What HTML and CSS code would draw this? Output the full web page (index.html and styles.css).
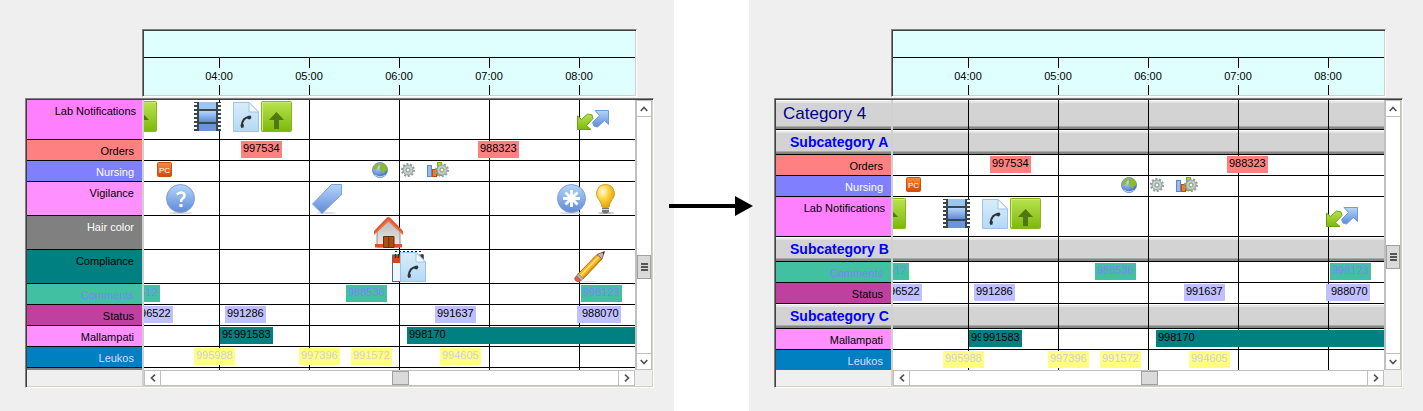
FILE: index.html
```html
<!DOCTYPE html>
<html lang="en">
<head>
<meta charset="utf-8">
<title>Timeline grouping</title>
<link rel="stylesheet" href="styles.css">
</head>
<body>
<svg class="defs" aria-hidden="true">
  <defs>
    <linearGradient id="g-green" x1="0" y1="0" x2="0" y2="1"><stop offset="0" stop-color="#b9e34f"/><stop offset="1" stop-color="#7cb80c"/></linearGradient>
    <linearGradient id="g-blue" x1="0" y1="0" x2="0" y2="1"><stop offset="0" stop-color="#b4d6fa"/><stop offset="1" stop-color="#5f8ad6"/></linearGradient>
    <linearGradient id="g-doc" x1="0" y1="0" x2="0" y2="1"><stop offset="0" stop-color="#d9edfa"/><stop offset="1" stop-color="#b4d9f5"/></linearGradient>
    <linearGradient id="g-orange" x1="0" y1="0" x2="0" y2="1"><stop offset="0" stop-color="#f98c3c"/><stop offset="1" stop-color="#d64a04"/></linearGradient>
    <linearGradient id="g-wall" x1="0" y1="0" x2="0" y2="1"><stop offset="0" stop-color="#b8b8b8"/><stop offset="1" stop-color="#ededed"/></linearGradient>
    <radialGradient id="g-bulb" cx=".35" cy=".3" r=".75"><stop offset="0" stop-color="#fffbe0"/><stop offset=".45" stop-color="#fbd43a"/><stop offset="1" stop-color="#e29a08"/></radialGradient>
    <radialGradient id="g-globe" cx=".35" cy=".3" r=".75"><stop offset="0" stop-color="#bcdcff"/><stop offset="1" stop-color="#3868c4"/></radialGradient>
    <symbol id="i-up" viewBox="0 0 31 31">
      <rect x=".5" y=".5" width="30" height="30" rx="1" fill="url(#g-green)" stroke="#86b81c"/>
      <path d="M1.5 29.500V1.500H29.500" fill="none" stroke="#cdee74"/>
      <path d="M15.500 11L23 19H18V28H13V19H8Z" fill="#4f7713"/>
    </symbol>
    <symbol id="i-film" viewBox="0 0 27 29">
      <rect width="27" height="29" fill="#3a464e"/>
      <rect x="5" y="0" width="17" height="7" fill="#9cc6f2"/>
      <rect x="5" y="9" width="17" height="11" fill="url(#g-blue)"/>
      <rect x="5" y="22" width="17" height="7" fill="#6a94dc"/>
      <path d="M2 1V29M25 1V29" stroke="#fff" stroke-width="2" stroke-dasharray="2 2"/>
      <path d="M0 1V29M27 1V29" stroke="#fff" stroke-width="2" stroke-dasharray="2 2"/>
    </symbol>
    <symbol id="i-doc" viewBox="0 0 26 30">
      <path d="M.5 .5H16L25.500 10V29.500H.5Z" fill="url(#g-doc)" stroke="#9cc4ea"/>
      <path d="M16 .5V10H25.500Z" fill="#f4faff" stroke="#9cc4ea"/>
      <path d="M9 24C9 18 12 15 17 15" fill="none" stroke="#2e3336" stroke-width="2"/>
      <path d="M8 21.500L11 22.500L10.500 25.500L8.500 26L7.500 24ZM14.500 14L17.500 13.500L18.500 15.500L17 17.500L14.500 17Z" fill="#2e3336"/>
    </symbol>
    <symbol id="i-arrows" viewBox="0 0 32 20">
      <path d="M18 .5H31.500V14.500L27.500 10.500L20.500 17L17 16L15.500 12.500L22.500 5.500Z" fill="url(#g-blue)" stroke="#6e9be0"/>
      <path d="M.5 6L4.500 9.500L10.500 4L15 5L16 8.500L9.500 15.500L14 19.500H.5Z" fill="url(#g-green)" stroke="#6fa30e"/>
    </symbol>
    <symbol id="i-pc" viewBox="0 0 15 15">
      <rect x=".5" y=".5" width="14" height="14" rx="1" fill="url(#g-orange)" stroke="#c65410"/>
      <text class="pc-text" x="7.500" y="11" text-anchor="middle" fill="#fff">PC</text>
    </symbol>
    <symbol id="i-globe" viewBox="0 0 16 16">
      <circle cx="8" cy="8" r="7.500" fill="url(#g-globe)" stroke="#6f94c8"/>
      <path d="M1 7Q2 3 6 1L8 2.500L6 4L5 7L3 8ZM8 2L12 1.500Q15.500 4 15.500 8L13 9L12 12L9.500 9L7.500 8L8 5Z" fill="#8dba2c"/>
      <path d="M3 13Q8 16.500 13 13" fill="none" stroke="#bcdcf6"/>
    </symbol>
    <symbol id="i-gear" viewBox="0 0 14 16">
      <circle cx="7" cy="8" r="6" fill="none" stroke="#8f9d98" stroke-width="2" stroke-dasharray="2 1.700"/>
      <circle cx="7" cy="8" r="5" fill="#c7d0cc" stroke="#93a09b"/>
      <circle cx="7" cy="8" r="2" fill="#f5f7f6" stroke="#84918c"/>
    </symbol>
    <symbol id="i-stats" viewBox="0 0 22 16">
      <rect x=".5" y="3.500" width="4" height="11" fill="#8fbcf2" stroke="#5d86cc"/>
      <rect x="5.500" y="7.500" width="4" height="7" fill="#f07c30" stroke="#c4490a"/>
      <rect x="10.500" y=".5" width="4" height="13" fill="#b4dc4a" stroke="#7cab14"/>
      <circle cx="15" cy="8" r="6" fill="none" stroke="#8f9d98" stroke-width="2" stroke-dasharray="2 1.700"/>
      <circle cx="15" cy="8" r="5" fill="#c2cdc6" stroke="#93a09b"/>
      <circle cx="15" cy="8" r="2" fill="#f5f7f6" stroke="#7d9a6c"/>
    </symbol>
    <symbol id="i-help" viewBox="0 0 29 30">
      <ellipse cx="14.500" cy="29" rx="12" ry="1" fill="#d8d8d8"/>
      <circle cx="14.500" cy="14.500" r="14" fill="url(#g-blue)" stroke="#7ba0dc"/>
      <path d="M11 10.500Q12.500 8.500 15 8.500Q18.500 8.800 18.500 11.500Q18.500 13.500 16.500 14.500Q15 15.500 15 18" fill="none" stroke="#fff" stroke-width="2.600"/>
      <rect x="13.500" y="20" width="3" height="3" fill="#fff"/>
    </symbol>
    <symbol id="i-star" viewBox="0 0 29 30">
      <ellipse cx="14.500" cy="29" rx="12" ry="1" fill="#d8d8d8"/>
      <circle cx="14.500" cy="14.500" r="14" fill="url(#g-blue)" stroke="#7ba0dc"/>
      <path d="M14.500 6V23M6 14.500H23M8.500 8.500L20.500 20.500M20.500 8.500L8.500 20.500" stroke="#fff" stroke-width="2.800"/>
    </symbol>
    <symbol id="i-tag" viewBox="0 0 30 30">
      <ellipse cx="14" cy="29" rx="10" ry="1" fill="#dedede"/>
      <path d="M19.500 .5H29.500V10.500L10 29.500L.5 20Z" fill="url(#g-blue)" stroke="#7ba0dc"/>
    </symbol>
    <symbol id="i-bulb" viewBox="0 0 19 30">
      <ellipse cx="10" cy="29" rx="8" ry="1" fill="#bbb"/>
      <path d="M6 23Q5.500 19 3 15.500Q.5 13 .5 9.500Q1.500 .5 9.500 .5Q17.500 .5 18.500 9.500Q18.500 13 16 15.500Q13.500 19 13 23Q9.500 25 6 23Z" fill="url(#g-bulb)" stroke="#d59a1c"/>
      <path d="M6 24H13V28L11 29.500H8L6 28Z" fill="#777"/>
      <path d="M6 25.500H13" stroke="#d8d8d8"/>
    </symbol>
    <symbol id="i-house" viewBox="0 0 29 31">
      <path d="M3 15L14.500 3L26 15V30H3Z" fill="url(#g-wall)" stroke="#8e8e8e"/>
      <path d="M1 27H9V30.500H1ZM20 27H28V30.500H20Z" fill="#dc5424"/>
      <path d="M9.500 19.500H20V30.500H9.500Z" fill="#a85212" stroke="#6c2f06"/>
      <path d="M14.750 19V31" stroke="#6c2f06"/>
      <path d="M0 14L12.500 1Q14.500 -1 16.500 1L29 14V18L14.500 4.500L0 18Z" fill="#e4572e"/>
      <path d="M1 16.500L14.500 3L28 16.500" fill="none" stroke="#f58c5c"/>
    </symbol>
    <symbol id="i-caldoc" viewBox="0 0 34 31">
      <rect x=".5" y="4" width="31" height="26.500" fill="#eef6fd" stroke="#3f6b96"/>
      <path d="M1 4H31V12H1Z" fill="#d9480c"/>
      <path d="M3.500 3V7M6.500 3V7M30 3V7" stroke="#333" stroke-width="1.500"/>
      <path d="M3 .5H29" stroke="#222" stroke-dasharray="2 2"/>
      <use href="#i-doc" x="8" y="1" width="26" height="30"/>
    </symbol>
    <symbol id="i-pencil" viewBox="0 0 31 31">
      <ellipse cx="14" cy="30.500" rx="9" ry=".5" fill="#ddd"/>
      <path d="M4 23L23 3.500L28 8L9 28Z" fill="#f7b51c" stroke="#b4700a"/>
      <path d="M6.500 24.500L25 5.500" stroke="#ffe48a" stroke-width="1.500"/>
      <path d="M8.500 27L27 8" stroke="#cf7e08"/>
      <path d="M23 3.500L30.500 .5L28 8Z" fill="#d9ab94" stroke="#8d6a5c"/>
      <path d="M28 1.500L30.500 .5L29.800 3.500Z" fill="#333"/>
      <path d="M4 22.500L9 27.500L7 29.500L2.500 25Z" fill="#b9bcc0" stroke="#8a8d92"/>
      <path d="M2.500 25L7 29.500Q4 32 1.500 29.500Q-.5 27 2.500 25Z" fill="#e8604c" stroke="#bf4a3a"/>
    </symbol>
    <symbol id="i-chev-up" viewBox="0 0 8 6"><path d="M.7 5L4 1.500L7.300 5" fill="none" stroke="#555" stroke-width="1.700"/></symbol>
    <symbol id="i-chev-down" viewBox="0 0 8 6"><path d="M.7 1L4 4.500L7.300 1" fill="none" stroke="#555" stroke-width="1.700"/></symbol>
    <symbol id="i-chev-left" viewBox="0 0 6 8"><path d="M5 .7L1.500 4L5 7.300" fill="none" stroke="#555" stroke-width="1.700"/></symbol>
    <symbol id="i-chev-right" viewBox="0 0 6 8"><path d="M1 .7L4.500 4L1 7.300" fill="none" stroke="#555" stroke-width="1.700"/></symbol>
  </defs>
</svg>

<main class="compare">
  <section class="pane" aria-label="Ungrouped timeline">
    <header class="ruler sunken">
      <div class="ruler-top"></div>
      <div class="hours"><time>04:00</time><time>05:00</time><time>06:00</time><time>07:00</time><time>08:00</time></div>
    </header>
    <div class="chart sunken">
      <div class="rows">
        <div class="row tall"><div class="label lab">Lab Notifications</div><div class="lane">
          <svg class="icon" style="left:-18px;width:31px;height:31px"><use href="#i-up"/></svg>
          <svg class="icon low" style="left:50px;width:27px;height:29px"><use href="#i-film"/></svg>
          <svg class="icon low" style="left:89px;width:26px;height:30px"><use href="#i-doc"/></svg>
          <svg class="icon" style="left:117px;width:31px;height:31px"><use href="#i-up"/></svg>
          <svg class="icon mid" style="left:433px;width:32px;height:20px"><use href="#i-arrows"/></svg>
        </div></div>
        <div class="row"><div class="label orders">Orders</div><div class="lane">
          <span class="event red" style="left:97px">997534</span><span class="event red" style="left:334px">988323</span>
        </div></div>
        <div class="row"><div class="label nursing">Nursing</div><div class="lane">
          <svg class="icon" style="left:13px;width:15px;height:15px"><use href="#i-pc"/></svg>
          <svg class="icon" style="left:228px;width:16px;height:16px"><use href="#i-globe"/></svg>
          <svg class="icon" style="left:257px;width:14px;height:16px"><use href="#i-gear"/></svg>
          <svg class="icon" style="left:283px;width:22px;height:16px"><use href="#i-stats"/></svg>
        </div></div>
        <div class="row medium"><div class="label vigilance">Vigilance</div><div class="lane">
          <svg class="icon low" style="left:22px;width:29px;height:30px"><use href="#i-help"/></svg>
          <svg class="icon low" style="left:168px;width:30px;height:30px"><use href="#i-tag"/></svg>
          <svg class="icon low" style="left:413px;width:29px;height:30px"><use href="#i-star"/></svg>
          <svg class="icon low" style="left:452px;width:19px;height:30px"><use href="#i-bulb"/></svg>
        </div></div>
        <div class="row medium"><div class="label hair">Hair color</div><div class="lane">
          <svg class="icon" style="left:230px;width:29px;height:31px"><use href="#i-house"/></svg>
        </div></div>
        <div class="row medium"><div class="label compliance">Compliance</div><div class="lane">
          <svg class="icon" style="left:248px;width:34px;height:31px"><use href="#i-caldoc"/></svg>
          <svg class="icon" style="left:430px;width:31px;height:31px"><use href="#i-pencil"/></svg>
        </div></div>
        <div class="row"><div class="label comments">Comments</div><div class="lane">
          <span class="event teal" style="left:-25px">998512</span><span class="event teal" style="left:202px">988536</span><span class="event teal" style="left:437px">998123</span>
        </div></div>
        <div class="row"><div class="label status">Status</div><div class="lane">
          <span class="event lilac" style="left:-12px">996522</span><span class="event lilac" style="left:81px">991286</span><span class="event lilac" style="left:291px">991637</span><span class="event lilac late" style="left:433px">988070</span>
        </div></div>
        <div class="row"><div class="label mallampati">Mallampati</div><div class="lane">
          <span class="event dark" style="left:76px;width:12px">991583</span><span class="event dark" style="left:88px">991583</span><span class="event dark open" style="left:263px">998170</span>
        </div></div>
        <div class="row"><div class="label leukos">Leukos</div><div class="lane">
          <span class="event yellow" style="left:50px">995988</span><span class="event yellow" style="left:155px">997396</span><span class="event yellow" style="left:207px">991572</span><span class="event yellow" style="left:296px">994605</span>
        </div></div>
        <div class="row rest"><div class="label hair"></div><div class="lane"></div></div>
      </div>
      <div class="vbar">
        <button type="button" aria-label="Scroll up"><svg class="chev"><use href="#i-chev-up"/></svg></button>
        <div class="track"><div class="thumb grip" style="margin-top:138px"></div></div>
        <button type="button" aria-label="Scroll down"><svg class="chev"><use href="#i-chev-down"/></svg></button>
      </div>
      <div class="foot"><div class="blank"></div><div class="hbar">
        <button type="button" aria-label="Scroll left"><svg class="chev side"><use href="#i-chev-left"/></svg></button>
        <div class="track"><div class="thumb" style="margin-left:231px"></div></div>
        <button type="button" aria-label="Scroll right"><svg class="chev side"><use href="#i-chev-right"/></svg></button>
      </div></div>
      <div class="blank"></div>
    </div>
  </section>

  <div class="between"><svg class="arrow" viewBox="0 0 84 20" aria-hidden="true"><path d="M0 8H66V0L84 10L66 20V12H0Z"/></svg></div>

  <section class="pane" aria-label="Timeline grouped by category">
    <header class="ruler sunken">
      <div class="ruler-top"></div>
      <div class="hours"><time>04:00</time><time>05:00</time><time>06:00</time><time>07:00</time><time>08:00</time></div>
    </header>
    <div class="chart sunken">
      <div class="rows">
        <div class="row category"><h2 class="label">Category 4</h2><div class="lane"></div></div>
        <div class="row subcategory"><h3 class="label">Subcategory A</h3><div class="lane"></div></div>
        <div class="row"><div class="label orders">Orders</div><div class="lane">
          <span class="event red" style="left:97px">997534</span><span class="event red" style="left:334px">988323</span>
        </div></div>
        <div class="row"><div class="label nursing">Nursing</div><div class="lane">
          <svg class="icon" style="left:13px;width:15px;height:15px"><use href="#i-pc"/></svg>
          <svg class="icon" style="left:228px;width:16px;height:16px"><use href="#i-globe"/></svg>
          <svg class="icon" style="left:257px;width:14px;height:16px"><use href="#i-gear"/></svg>
          <svg class="icon" style="left:283px;width:22px;height:16px"><use href="#i-stats"/></svg>
        </div></div>
        <div class="row tall"><div class="label lab">Lab Notifications</div><div class="lane">
          <svg class="icon" style="left:-18px;width:31px;height:31px"><use href="#i-up"/></svg>
          <svg class="icon low" style="left:50px;width:27px;height:29px"><use href="#i-film"/></svg>
          <svg class="icon low" style="left:89px;width:26px;height:30px"><use href="#i-doc"/></svg>
          <svg class="icon" style="left:117px;width:31px;height:31px"><use href="#i-up"/></svg>
          <svg class="icon mid" style="left:433px;width:32px;height:20px"><use href="#i-arrows"/></svg>
        </div></div>
        <div class="row subcategory"><h3 class="label">Subcategory B</h3><div class="lane"></div></div>
        <div class="row"><div class="label comments">Comments</div><div class="lane">
          <span class="event teal" style="left:-25px">998512</span><span class="event teal" style="left:202px">988536</span><span class="event teal" style="left:437px">998123</span>
        </div></div>
        <div class="row"><div class="label status">Status</div><div class="lane">
          <span class="event lilac" style="left:-12px">996522</span><span class="event lilac" style="left:81px">991286</span><span class="event lilac" style="left:291px">991637</span><span class="event lilac late" style="left:433px">988070</span>
        </div></div>
        <div class="row subcategory"><h3 class="label">Subcategory C</h3><div class="lane"></div></div>
        <div class="row"><div class="label mallampati">Mallampati</div><div class="lane">
          <span class="event dark" style="left:76px;width:12px">991583</span><span class="event dark" style="left:88px">991583</span><span class="event dark open" style="left:263px">998170</span>
        </div></div>
        <div class="row last"><div class="label leukos">Leukos</div><div class="lane">
          <span class="event yellow" style="left:50px">995988</span><span class="event yellow" style="left:155px">997396</span><span class="event yellow" style="left:207px">991572</span><span class="event yellow" style="left:296px">994605</span>
        </div></div>
      </div>
      <div class="vbar">
        <button type="button" aria-label="Scroll up"><svg class="chev"><use href="#i-chev-up"/></svg></button>
        <div class="track"><div class="thumb grip" style="margin-top:128px"></div></div>
        <button type="button" aria-label="Scroll down"><svg class="chev"><use href="#i-chev-down"/></svg></button>
      </div>
      <div class="foot"><div class="blank"></div><div class="hbar">
        <button type="button" aria-label="Scroll left"><svg class="chev side"><use href="#i-chev-left"/></svg></button>
        <div class="track"><div class="thumb" style="margin-left:231px"></div></div>
        <button type="button" aria-label="Scroll right"><svg class="chev side"><use href="#i-chev-right"/></svg></button>
      </div></div>
      <div class="blank"></div>
    </div>
  </section>
</main>
</body>
</html>
```

FILE: styles.css
```css
* { box-sizing: border-box; }

body {
  margin: 0;
  background: #fff;
  color: #000;
  font: 11px/16px "Liberation Sans", Arial, sans-serif;
}

.defs { position: absolute; width: 0; height: 0; }
.pc-text { font: 8px "Liberation Sans", Arial, sans-serif; }

.compare {
  display: grid;
  grid-template-columns: 1fr 75px 1fr;
  min-height: 100vh;
}

.pane {
  min-width: 0;
  padding: 29px 20px 23px 25px;
  background: #efefef;
}

.between { position: relative; }

.arrow {
  position: absolute;
  z-index: 1;
  top: 196px;
  left: -5px;
  width: 84px;
  height: 20px;
}

/* Two-tone recessed frame */
.sunken {
  padding: 1px;
  border: 1px solid;
  border-color: #808080 #fff #fff #808080;
  box-shadow: inset 1px 1px #404040, inset -1px -1px #d4d0c8;
}

.ruler {
  margin: 0 17px 1px 117px;
  background: #dfffff;
}

.ruler-top { height: 27px; border-bottom: 1px solid #000; }

.hours {
  display: flex;
  height: 37px;
  padding: 10px 0 0 30px;
  overflow: hidden;
  background: repeating-linear-gradient(90deg, #000 0 1px, transparent 1px 90px) 75px 0 no-repeat;
}

.hours time {
  flex: 0 0 90px;
  height: 17px;
  background: #dfffff;
  text-align: center;
}

.chart {
  display: grid;
  grid-template-columns: minmax(0, 1fr) 17px;
  background: #efefef;
}

.row {
  display: grid;
  grid-template-columns: 115px minmax(0, 1fr);
  column-gap: 2px;
  height: 21px;
  background: #d0d0d0;
}

.row.medium { height: 34px; }
.row.tall { height: 40px; }
.row.rest { height: 2px; }
.row.last { height: 20px; }
.row.category { height: 30px; }
.row.subcategory { height: 25px; }

.label {
  margin: 0;
  padding: 3px 8px 0 0;
  border-bottom: 1px solid #000;
  overflow: hidden;
  white-space: nowrap;
  text-align: right;
}

.lane {
  position: relative;
  overflow: hidden;
  border-bottom: 1px solid #000;
  background: repeating-linear-gradient(90deg, #000 0 1px, transparent 1px 90px) 75px 0 no-repeat, #fff;
}

.rest .label, .rest .lane, .last .label, .last .lane { border-bottom: 0; }

.category .label, .subcategory .label {
  background: linear-gradient(#fff 0 1px, #e6e6e6 1px 3px, transparent 3px calc(100% - 3px), #aaa calc(100% - 3px) calc(100% - 2px), #858585 calc(100% - 2px)), #d3d3d3;
  text-align: left;
}

.category .lane, .subcategory .lane {
  background:
    repeating-linear-gradient(90deg, #000 0 1px, transparent 1px 90px) 75px 0 no-repeat,
    linear-gradient(#fff 0 1px, #e6e6e6 1px 3px, transparent 3px calc(100% - 3px), #aaa calc(100% - 3px) calc(100% - 2px), #858585 calc(100% - 2px)),
    #d3d3d3;
}

.category .label { padding: 4px 0 0 7px; color: #00008b; font-size: 17px; font-weight: 400; line-height: 20px; }
.subcategory .label { padding: 4px 0 0 14px; color: #00f; font-size: 14px; font-weight: 700; }

.lab { padding-right: 6px; background: #ff80ff; }
.orders { background: #ff8080; }
.nursing { background: #8080ff; color: #fff; }
.vigilance, .mallampati { background: #ff90ff; }
.hair { background: #808080; color: #fff; }
.compliance { background: #008080; }
.comments { background: #42c0a2; color: #8080ff; }
.status { background: #c040a0; }
.leukos { background: #0080c0; color: #dcdcff; }
.row.rest .label { padding: 0; }

.event {
  position: absolute;
  top: 1px;
  width: 41px;
  height: 17px;
  padding-left: 2px;
  overflow: hidden;
  line-height: 15px;
}

.red { background: #ff8080; }
.teal { background: #42c0a2; color: #8080ff; }
.lilac { background: #c0c0ff; }
.late { width: 44px; padding-left: 5px; }
.dark { background: #008080; }
.open { right: 0; width: auto; }
.yellow { background: #ffff80; color: #d0d0d8; }

.icon { position: absolute; top: 1px; }
.icon.low { top: 2px; }
.icon.mid { top: 10px; }

.vbar, .hbar { display: flex; background: #fff; }
.vbar { flex-direction: column; border: 1px solid #c0c0c0; border-width: 1px 1px 1px 2px; }
.hbar { border: 1px solid #c0c0c0; }
.track { flex: 1; }

.vbar button, .hbar button {
  display: flex;
  align-items: center;
  justify-content: center;
  padding: 0;
  border: 0 solid #c0c0c0;
  background: #fff;
}

.vbar button { height: 16px; }
.vbar button:first-child { border-bottom-width: 1px; }
.vbar button:last-child { border-top-width: 1px; }
.hbar button { width: 16px; }
.hbar button:first-child { border-right-width: 1px; }
.hbar button:last-child { border-left-width: 1px; }

.chev { width: 8px; height: 6px; }
.chev.side { width: 6px; height: 8px; }

.thumb { border: 1px solid #a0a0a0; background: #dadada; }
.hbar .thumb { width: 17px; height: 14px; }
.vbar .thumb { height: 24px; }

.grip {
  display: flex;
  align-items: center;
  justify-content: center;
}

.grip::before {
  content: "";
  width: 7px;
  height: 8px;
  background: repeating-linear-gradient(#555 0 2px, transparent 2px 3px);
}

.foot {
  display: grid;
  grid-template-columns: 115px minmax(0, 1fr);
  column-gap: 2px;
  height: 16px;
  background: #d0d0d0;
}

.blank { background: #efefef; }
```
